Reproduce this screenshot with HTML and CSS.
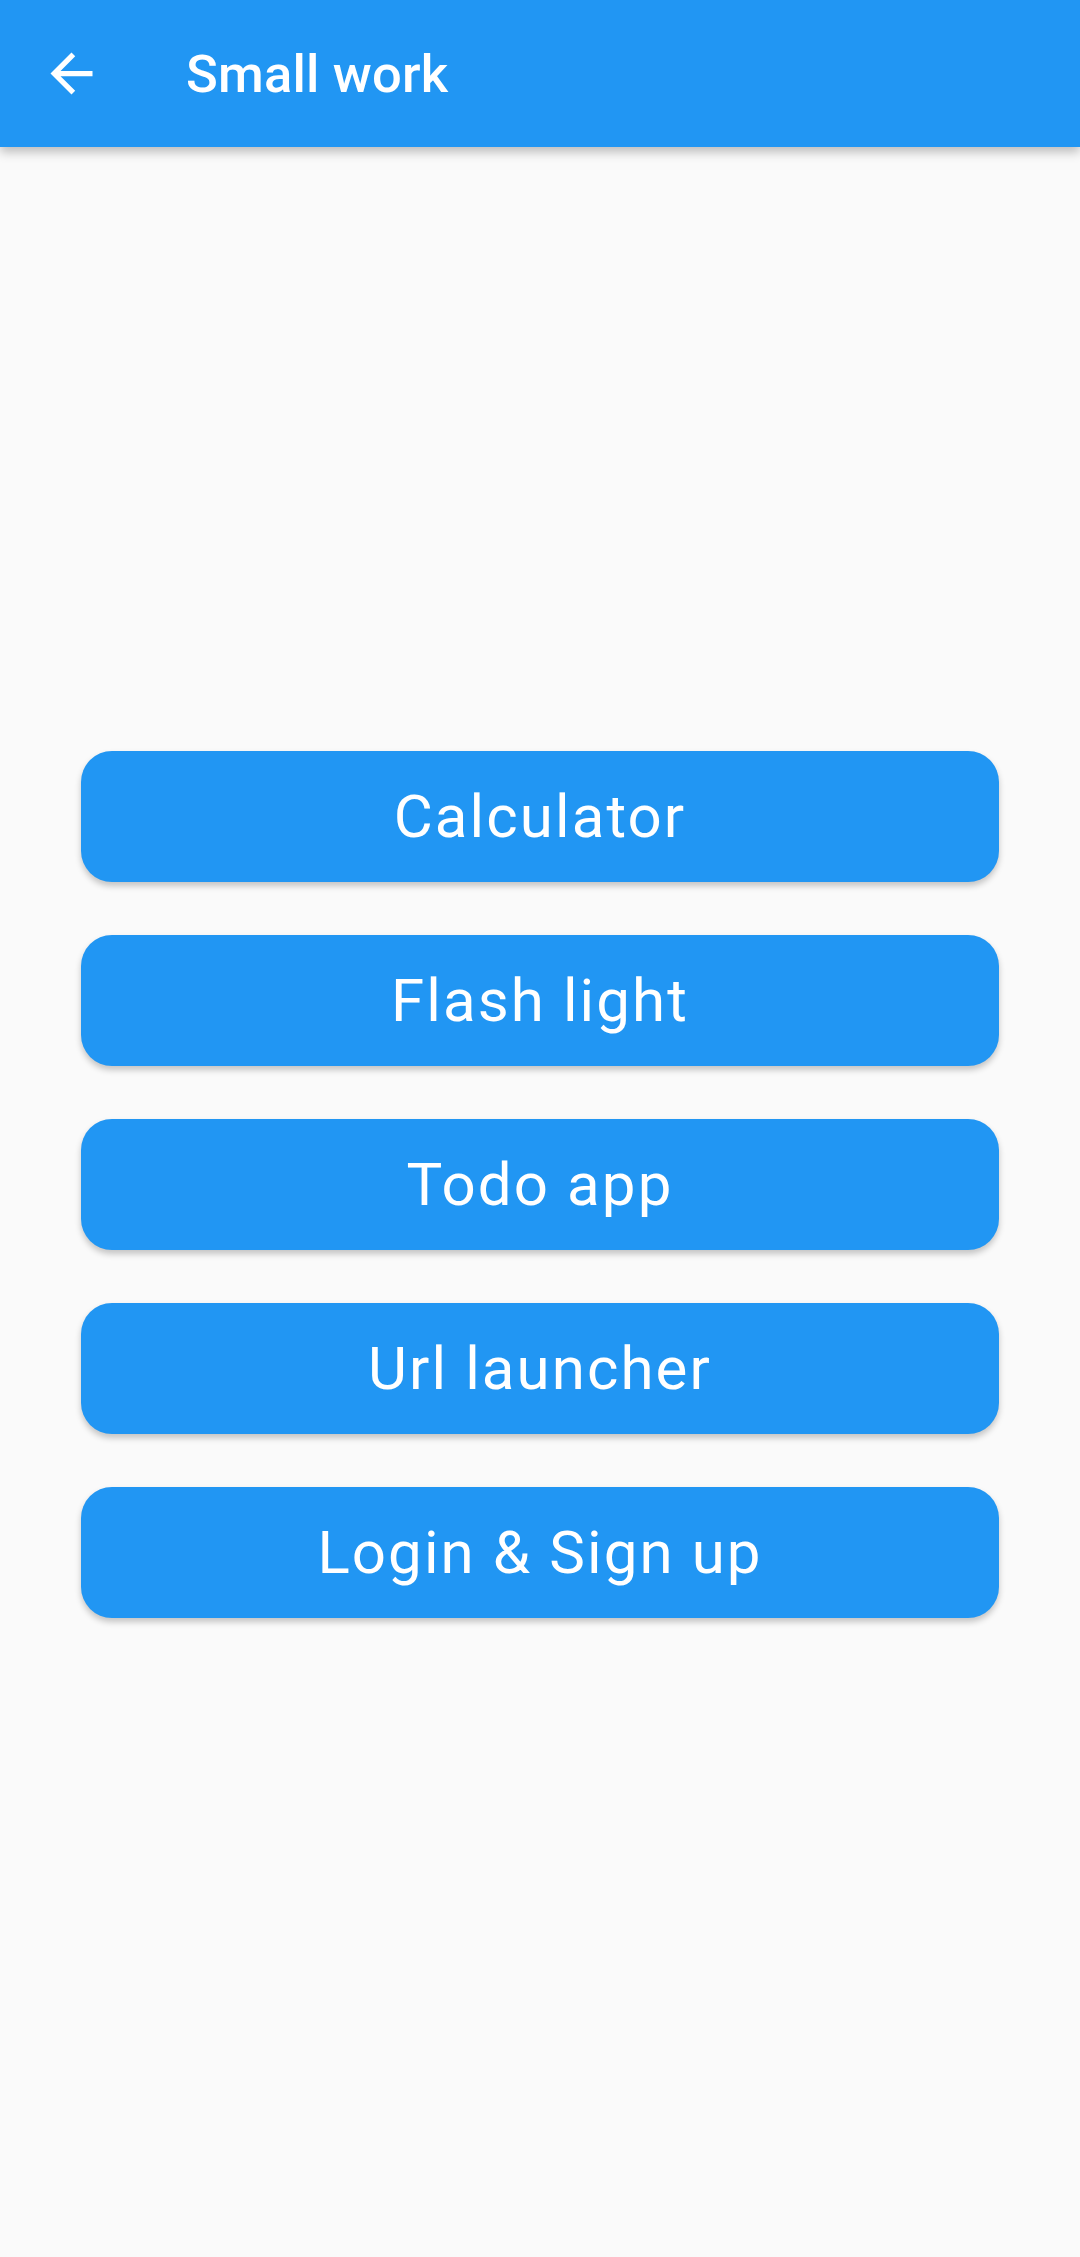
FILE: index.html
```html
<!DOCTYPE html>
<html>
<head>
<meta charset="utf-8">
<link rel="stylesheet" href="styles.css">
</head>
<body>
<header class="appbar">
  <div class="back">
    <svg width="63" height="63" viewBox="0 0 24 24"><path d="M20 11H7.83l5.59-5.59L12 4l-8 8 8 8 1.41-1.41L7.83 13H20v-2z" fill="#fff"/></svg>
  </div>
  <h1 class="title">Small work</h1>
</header>
<main class="content">
  <div class="btn">Calculator</div>
  <div class="btn">Flash light</div>
  <div class="btn">Todo app</div>
  <div class="btn">Url launcher</div>
  <div class="btn">Login &amp; Sign up</div>
</main>
</body>
</html>
```
FILE: styles.css
```css
html, body {
  margin: 0;
  padding: 0;
  background: #fafafa;
  font-family: Roboto, "Noto Sans", sans-serif;
}
body {
  width: 1080px;
  height: 2257px;
  overflow: hidden;
}
.appbar {
  height: 147px;
  background: #2196f3;
  display: flex;
  align-items: center;
  box-shadow: 0 5px 10px rgba(0,0,0,0.25);
  position: relative;
  z-index: 1;
}
.back {
  width: 63px;
  height: 63px;
  margin-left: 40px;
  display: flex;
}
.title {
  margin: 0 0 0 83px;
  color: #fff;
  font-size: 52.5px;
  font-weight: 500;
  letter-spacing: 0.2px;
}
.content {
  padding: 604px 81px 0;
  display: flex;
  flex-direction: column;
  gap: 53px;
}
.btn {
  height: 131px;
  background: #2196f3;
  border-radius: 31px;
  color: #fff;
  font-size: 60px;
  letter-spacing: 2.1px;
  display: flex;
  align-items: center;
  justify-content: center;
  box-shadow: 0 4px 6px rgba(0,0,0,0.22);
}
```
